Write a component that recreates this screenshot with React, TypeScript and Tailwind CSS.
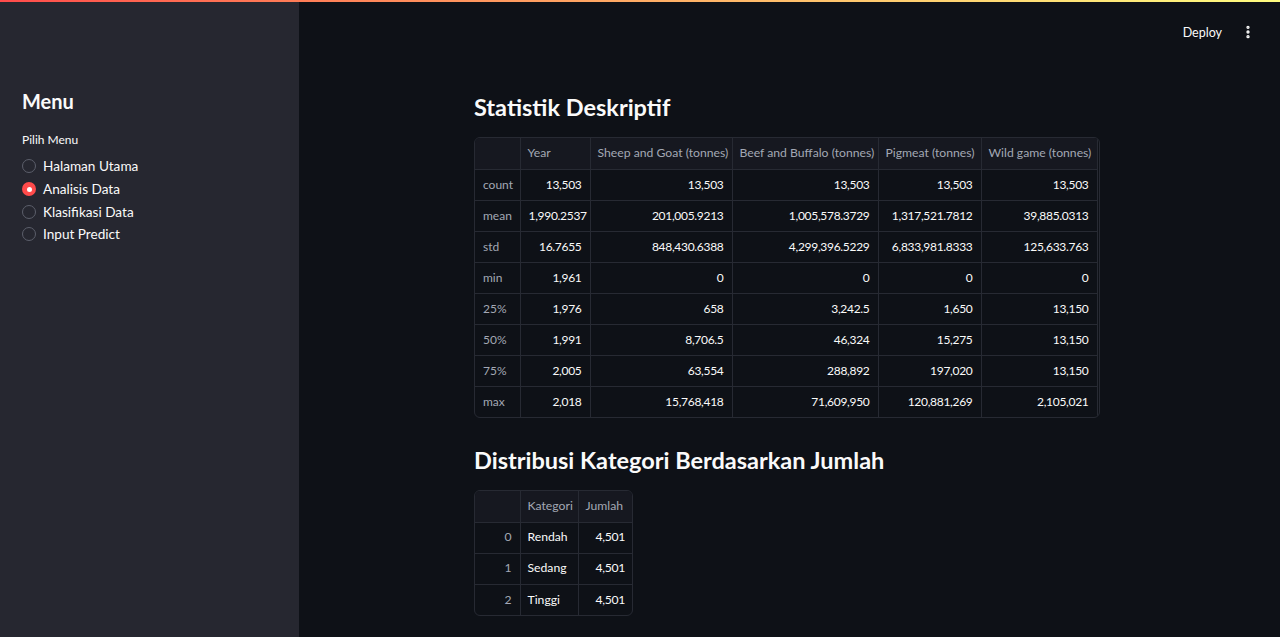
import { EllipsisVertical } from "lucide-react";

const statCols = [
  { name: "", w: "w-[45px]" },
  { name: "Year", w: "w-[70px]" },
  { name: "Sheep and Goat (tonnes)", w: "w-[142px]" },
  { name: "Beef and Buffalo (tonnes)", w: "w-[146px]" },
  { name: "Pigmeat (tonnes)", w: "w-[103px]" },
  { name: "Wild game (tonnes)", w: "w-[116px]" },
];

const statRows = [
  ["count", "13,503", "13,503", "13,503", "13,503", "13,503"],
  ["mean", "1,990.2537", "201,005.9213", "1,005,578.3729", "1,317,521.7812", "39,885.0313"],
  ["std", "16.7655", "848,430.6388", "4,299,396.5229", "6,833,981.8333", "125,633.763"],
  ["min", "1,961", "0", "0", "0", "0"],
  ["25%", "1,976", "658", "3,242.5", "1,650", "13,150"],
  ["50%", "1,991", "8,706.5", "46,324", "15,275", "13,150"],
  ["75%", "2,005", "63,554", "288,892", "197,020", "13,150"],
  ["max", "2,018", "15,768,418", "71,609,950", "120,881,269", "2,105,021"],
];

const katRows = [
  ["0", "Rendah", "4,501"],
  ["1", "Sedang", "4,501"],
  ["2", "Tinggi", "4,501"],
];

const menu = ["Halaman Utama", "Analisis Data", "Klasifikasi Data", "Input Predict"];

function Radio({ checked }: { checked: boolean }) {
  if (checked) {
    return (
      <span className="w-[14px] h-[14px] rounded-full bg-[#ff4b4b] flex items-center justify-center">
        <span className="w-[5px] h-[5px] rounded-full bg-white" />
      </span>
    );
  }
  return <span className="w-[14px] h-[14px] rounded-full border border-[#5c5f6b]" />;
}

export default function App() {
  return (
    <div
      className="relative flex h-[637px] w-full overflow-hidden bg-[#0e1117] text-[#fafafa]"
      style={{ fontFamily: "Lato, 'Noto Sans', sans-serif" }}
    >
      {/* top decoration */}
      <div className="absolute top-0 inset-x-0 h-[2px] bg-gradient-to-r from-[#ff4b4b] to-[#fffd80]" />

      {/* Sidebar */}
      <aside className="w-[299px] shrink-0 bg-[#262730] px-[22px] pt-[88px]">
        <h2 className="text-[20px] font-bold leading-[26px]">Menu</h2>
        <p className="mt-[17px] text-[12px] leading-[18px]">Pilih Menu</p>
        <div className="mt-[6px] flex flex-col">
          {menu.map((m) => (
            <label key={m} className="flex items-center gap-[7px] h-[22.7px] text-[13.6px]">
              <Radio checked={m === "Analisis Data"} />
              <span>{m}</span>
            </label>
          ))}
        </div>
      </aside>

      {/* Main */}
      <main className="flex-1 flex flex-col">
        <div className="h-[60px] flex items-center justify-end pr-[24px] gap-[18px]">
          <span className="text-[12.5px] mt-[6px]">Deploy</span>
          <EllipsisVertical className="w-[16px] h-[16px] mt-[4px]" strokeWidth={3} />
        </div>

        <div className="ml-[175px] w-[626px]">
          <h3 className="mt-[31px] text-[23.5px] font-bold leading-[32px]">Statistik Deskriptif</h3>

          <div className="mt-[14px] w-[626px] rounded-[6px] border border-[#272a33] overflow-hidden">
            <table className="w-[622px] border-collapse table-fixed whitespace-nowrap">
              <thead>
                <tr className="bg-[#161820] h-[31px] text-[12.2px]">
                  {statCols.map((c, i) => (
                    <th
                      key={i}
                      className={`${c.w} border-r border-b border-[#272a33] px-[7px] text-left font-normal text-[#a3a8b4] overflow-hidden`}
                    >
                      {c.name}
                    </th>
                  ))}
                </tr>
              </thead>
              <tbody className="text-[12px] tracking-[-0.3px]">
                {statRows.map((r, ri) => (
                  <tr key={ri} className="h-[31px]">
                    {r.map((v, ci) => (
                      <td
                        key={ci}
                        className={`border-r border-[#272a33] px-[8px] overflow-hidden ${
                          ri < statRows.length - 1 ? "border-b" : ""
                        } ${ci === 0 ? "text-left text-[#a3a8b4] tracking-normal" : "text-right"}`}
                      >
                        {v}
                      </td>
                    ))}
                  </tr>
                ))}
              </tbody>
            </table>
          </div>

          <h3 className="mt-[26px] text-[23.5px] font-bold leading-[32px]">
            Distribusi Kategori Berdasarkan Jumlah
          </h3>

          <div className="mt-[14px] w-[159px] rounded-[6px] border border-[#272a33] overflow-hidden">
            <table className="w-[158px] border-collapse table-fixed whitespace-nowrap text-[12.2px]">
              <thead>
                <tr className="bg-[#161820] h-[31px]">
                  <th className="w-[45px] border-r border-b border-[#272a33]" />
                  <th className="w-[58px] border-r border-b border-[#272a33] px-[7px] text-left font-normal text-[#a3a8b4]">
                    Kategori
                  </th>
                  <th className="w-[55px] border-b border-[#272a33] px-[7px] text-left font-normal text-[#a3a8b4]">
                    Jumlah
                  </th>
                </tr>
              </thead>
              <tbody>
                {katRows.map((r, ri) => (
                  <tr key={ri} className="h-[31px]">
                    <td
                      className={`border-r border-[#272a33] px-[8px] text-right text-[#a3a8b4] ${
                        ri < 2 ? "border-b" : ""
                      }`}
                    >
                      {r[0]}
                    </td>
                    <td className={`border-r border-[#272a33] px-[7px] text-left ${ri < 2 ? "border-b" : ""}`}>
                      {r[1]}
                    </td>
                    <td
                      className={`border-[#272a33] px-[8px] text-right tracking-[-0.3px] ${
                        ri < 2 ? "border-b" : ""
                      }`}
                    >
                      {r[2]}
                    </td>
                  </tr>
                ))}
              </tbody>
            </table>
          </div>
        </div>
      </main>
    </div>
  );
}
